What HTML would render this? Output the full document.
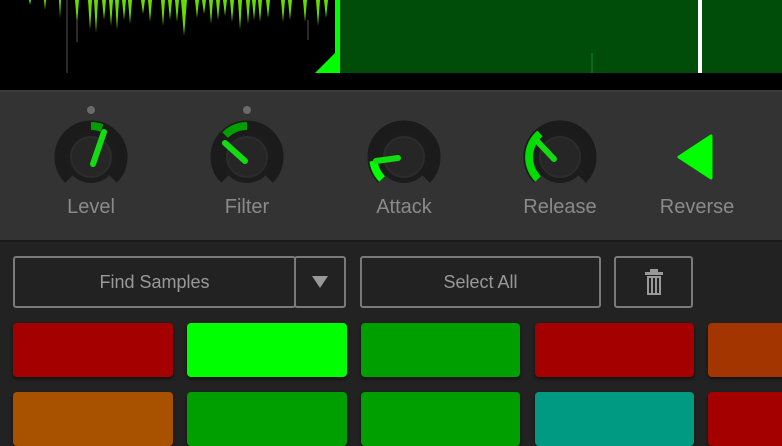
<!DOCTYPE html>
<html><head><style>
body{margin:0;width:782px;height:440px;overflow:hidden;background:#222;font-family:"Liberation Sans",sans-serif}
.top{position:absolute;left:0;top:0;width:782px;height:90px;background:#000}
.mid{position:absolute;left:0;top:90px;width:782px;height:150px;background:#333;border-top:2px solid #3c3c3c;box-sizing:border-box}
.bot{position:absolute;left:0;top:240px;width:782px;height:200px;background:#222;border-top:2px solid #1a1a1a;box-sizing:border-box}
.lbl{position:absolute;top:196px;width:120px;text-align:center;color:#8a8a8a;font-size:20px}
.btn{position:absolute;top:256px;height:52px;border:2px solid #7a7a7a;border-radius:3px;box-sizing:border-box;color:#999;font-size:18px;display:flex;align-items:center;justify-content:center}
.pad{position:absolute;height:54px;border-radius:4px;box-shadow:0 2px 3px rgba(0,0,0,.5)}
</style></head><body>
<div class="top">
<svg width="782" height="90" style="position:absolute;left:0;top:0">
<rect x="338" y="0" width="444" height="73" fill="#004d0a"/>
<g fill="#66dd00">
<polygon points="29,0 31,0 30,5"/><polygon points="44,0 46,0 45,10"/><polygon points="59,0 61,0 60,18"/>
<polygon points="75,0 79,0 77,24"/><polygon points="88,0 92,0 90,30"/><polygon points="94,0 98,0 96,33"/>
<polygon points="102,0 106,0 104,20"/><polygon points="109,0 113,0 111,26"/><polygon points="115,0 119,0 117,30"/>
<polygon points="122,0 126,0 124,20"/><polygon points="128,0 132,0 130,24"/><polygon points="141,0 145,0 143,14"/>
<polygon points="148,0 152,0 150,22"/><polygon points="161,0 165,0 163,26"/><polygon points="175,0 179,0 177,22"/>
<polygon points="181,0 187,0 184,36"/><polygon points="202,0 206,0 204,14"/><polygon points="209,0 213,0 211,24"/>
<polygon points="216,0 220,0 218,20"/><polygon points="230,0 234,0 232,22"/><polygon points="238,0 242,0 240,30"/>
<polygon points="246,0 250,0 248,24"/><polygon points="252,0 256,0 254,20"/><polygon points="258,0 262,0 260,22"/>
<polygon points="266,0 270,0 268,18"/><polygon points="281,0 285,0 283,22"/><polygon points="288,0 292,0 290,20"/>
<polygon points="303,0 307,0 305,22"/><polygon points="316,0 320,0 318,26"/><polygon points="324,0 328,0 326,18"/>
<polygon points="168,0 172,0 170,20"/><polygon points="195,0 199,0 197,18"/><polygon points="223,0 227,0 225,16"/>
</g>
<g stroke="#555" stroke-width="1"><line x1="67" y1="0" x2="67" y2="73"/><line x1="77" y1="20" x2="77" y2="42"/><line x1="308" y1="20" x2="308" y2="40"/></g>
<rect x="335" y="0" width="5" height="73" fill="#00ff00"/>
<polygon points="315,73 336,52 336,73" fill="#00ff00"/>
<line x1="592" y1="53" x2="592" y2="73" stroke="#0a8a2a"/>
<rect x="698" y="0" width="4" height="73" fill="#fff"/>
</svg></div>
<div class="mid">
<svg width="782" height="150" style="position:absolute;left:0;top:-2px">
<defs>
<g id="kb">
<path d="M -21.9 21.9 A 31 31 0 1 1 21.9 21.9" fill="none" stroke="#1b1b1b" stroke-width="11"/>
<circle r="26" fill="#1c1c1c"/>
<circle r="20" fill="#262626" stroke="#2c2c2c" stroke-width="2"/>
</g>
</defs>
<circle cx="91" cy="20" r="4" fill="#6a6a6a"/><circle cx="247" cy="20" r="4" fill="#6a6a6a"/>
<g transform="translate(91,67)"><use href="#kb"/>
<path d="M0 -31 A31 31 0 0 1 11 -29" fill="none" stroke="#009f00" stroke-width="8"/>
<line x1="2" y1="7" x2="13" y2="-25" stroke="#11dd11" stroke-width="6" stroke-linecap="round"/></g>
<g transform="translate(247,67)"><use href="#kb"/>
<path d="M-21.9 -21.9 A31 31 0 0 1 0 -31" fill="none" stroke="#009f00" stroke-width="8"/>
<line x1="-2" y1="4" x2="-22" y2="-14" stroke="#11dd11" stroke-width="6" stroke-linecap="round"/></g>
<g transform="translate(404,67)"><use href="#kb"/>
<path d="M-21.9 21.9 A31 31 0 0 1 -30.5 4" fill="none" stroke="#00ff00" stroke-width="8"/>
<line x1="-6" y1="1" x2="-28" y2="4" stroke="#11dd11" stroke-width="6" stroke-linecap="round"/></g>
<g transform="translate(560,67)"><use href="#kb"/>
<path d="M-21.9 21.9 A31 31 0 0 1 -20 -23.5" fill="none" stroke="#00dd00" stroke-width="8"/>
<line x1="-6" y1="2" x2="-22" y2="-15" stroke="#11dd11" stroke-width="6" stroke-linecap="round"/></g>
<polygon points="679,67 711,46 711,88" fill="#00ff00" stroke="#00ff00" stroke-width="3" stroke-linejoin="round"/>
</svg>
</div>
<div class="lbl" style="left:31px">Level</div>
<div class="lbl" style="left:187px">Filter</div>
<div class="lbl" style="left:344px">Attack</div>
<div class="lbl" style="left:500px">Release</div>
<div class="lbl" style="left:637px">Reverse</div>
<div class="bot"></div>
<div class="btn" style="left:13px;width:283px">Find Samples</div>
<div class="btn" style="left:294px;width:52px"><svg width="16" height="12"><polygon points="0,0 16,0 8,12" fill="#999"/></svg></div>
<div class="btn" style="left:360px;width:241px">Select All</div>
<div class="btn" style="left:614px;width:79px"><svg width="20" height="28" viewBox="0 0 20 28"><rect x="6" y="1" width="8" height="3" fill="#999"/><rect x="1" y="4" width="18" height="3" fill="#999"/><rect x="3" y="8" width="14" height="19" fill="#999"/><g fill="#222"><rect x="5" y="10" width="2" height="15"/><rect x="9" y="10" width="2" height="15"/><rect x="13" y="10" width="2" height="15"/></g></svg></div>
<div class="pad" style="left:13px;top:323px;width:160px;background:#a50000"></div>
<div class="pad" style="left:187px;top:323px;width:160px;background:#00ff00"></div>
<div class="pad" style="left:361px;top:323px;width:159px;background:#009f00"></div>
<div class="pad" style="left:535px;top:323px;width:159px;background:#a50000"></div>
<div class="pad" style="left:708px;top:323px;width:90px;background:#a33500"></div>
<div class="pad" style="left:13px;top:392px;width:160px;background:#a85200"></div>
<div class="pad" style="left:187px;top:392px;width:160px;background:#009f00"></div>
<div class="pad" style="left:361px;top:392px;width:159px;background:#009f00"></div>
<div class="pad" style="left:535px;top:392px;width:159px;background:#009a82"></div>
<div class="pad" style="left:708px;top:392px;width:90px;background:#a50000"></div>
</body></html>
